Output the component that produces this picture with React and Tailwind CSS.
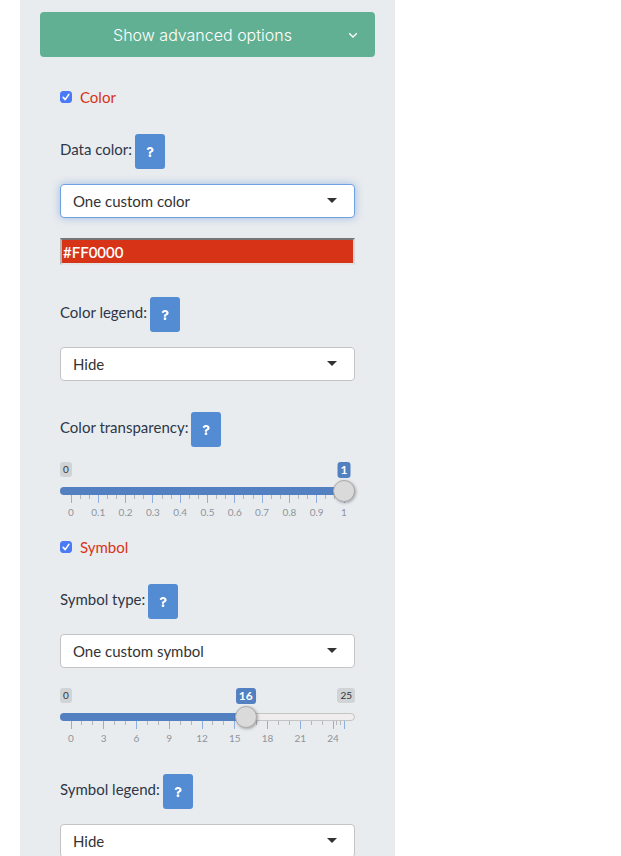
import React, { useState } from 'react';
import { FaQuestion } from 'react-icons/fa';

const LATO = "font-['Lato','Noto_Sans',sans-serif]";

const SectionToggle = ({ id, label }) => {
  const [checked, setChecked] = useState(true);
  return (
    <div className="flex h-5 items-center gap-2">
      <span className="grid size-3">
        <input
          id={id}
          type="checkbox"
          checked={checked}
          onChange={(e) => setChecked(e.target.checked)}
          className="size-3 appearance-none rounded-[3px] border border-[#4a7af5] bg-white [grid-area:1/1] checked:bg-[#4a7af5]"
        />
        {checked && (
          <svg viewBox="0 0 12 12" className="pointer-events-none size-3 [grid-area:1/1]" aria-hidden="true">
            <path d="M3.2 6.4 5.2 8.6 8.9 3.4" fill="none" stroke="#fff" strokeWidth="1.6" strokeLinecap="round" strokeLinejoin="round" />
          </svg>
        )}
      </span>
      <label htmlFor={id} className="text-[15px] leading-5 text-[#d73317]">{label}</label>
    </div>
  );
};

const FieldLabel = ({ htmlFor, children }) => (
  <div className="flex h-[35px] items-center gap-[3px]">
    <label htmlFor={htmlFor} className="pb-[6px] text-[15px] leading-5 text-[#2d3748]">{children}</label>
    <button
      type="button"
      aria-label="Help"
      className="flex h-[35px] w-[30px] items-center justify-center rounded-[3px] bg-[#548cd4] text-white">
      <FaQuestion className="size-[10px]" />
    </button>
  </div>
);

const SelectBox = ({ id, options, active }) => (
  <div className="mt-[15px] grid items-center">
    <select
      id={id}
      className={`h-[34px] w-full appearance-none rounded-[4px] border bg-white px-3 text-[15px] text-[#333] outline-none [grid-area:1/1] ${
        active ? 'border-[#6fa0e0] shadow-[0_0_8px_rgba(84,140,212,0.5)]' : 'border-[#c4c4c4]'
      }`}>
      {options.map((option) => (
        <option key={option}>{option}</option>
      ))}
    </select>
    <svg viewBox="0 0 10 5" className="pointer-events-none mr-[18px] mb-[2px] h-[5px] w-[10px] justify-self-end [grid-area:1/1]" aria-hidden="true">
      <path d="M0 0H10L5 5Z" fill="#333" />
    </svg>
  </div>
);

const Slider = ({ id, max, step, initial, labels, labelSpan, ticks, hideMax }) => {
  const [value, setValue] = useState(initial);
  const ratio = value / max;
  return (
    <div className="text-[10px]">
      <div className="relative flex h-[15px] justify-between leading-[15px] text-[#333]">
        <span className="rounded-[3px] bg-[#d1d4d6] px-[3px]">0</span>
        {!hideMax && <span className="rounded-[3px] bg-[#d1d4d6] px-[3px]">{max}</span>}
        <div className="absolute inset-x-[11px] top-0">
          <output
            htmlFor={id}
            className="absolute top-0 h-4 -translate-x-1/2 rounded-[3px] bg-[#5380c0] px-[3px] text-[12px] leading-4 font-bold text-white"
            style={{ left: `${ratio * 100}%` }}>
            {value}
          </output>
        </div>
      </div>
      <div className="mt-[3px] grid h-[22px] items-center">
        <div className="h-2 overflow-hidden rounded-[4px] border border-[#c4c4c4] bg-[#efeded] [grid-area:1/1]" />
        <div
          className="h-2 rounded-l-[4px] bg-[#5380c0] [grid-area:1/1]"
          style={{ width: `calc((100% - 22px) * ${ratio} + 11px)` }}
        />
        <input
          id={id}
          type="range"
          min={0}
          max={max}
          step={step}
          value={value}
          onChange={(e) => setValue(Number(e.target.value))}
          className="z-10 h-[22px] w-full appearance-none bg-transparent outline-none [grid-area:1/1] [&::-webkit-slider-thumb]:size-[22px] [&::-webkit-slider-thumb]:appearance-none [&::-webkit-slider-thumb]:rounded-full [&::-webkit-slider-thumb]:border [&::-webkit-slider-thumb]:border-[#ababab] [&::-webkit-slider-thumb]:bg-[#dadada] [&::-webkit-slider-thumb]:shadow-[1px_1px_3px_rgba(0,0,0,0.3)]"
        />
      </div>
      {/* the scale starts right under the bar, behind the handle */}
      <div className="-mt-[7px] px-[11px]">
        <svg className="block h-2 w-full overflow-visible" aria-hidden="true">
          {ticks.map(({ at, big }) => (
            <line
              key={at}
              x1={`${at}%`}
              x2={`${at}%`}
              y1="0"
              y2={big ? 8 : 4}
              stroke={big ? '#8fb0de' : '#b3b7bb'}
              strokeWidth="1"
              shapeRendering="crispEdges"
            />
          ))}
        </svg>
        <div className="mt-[3px] flex h-3 justify-between leading-3 text-[#8e949c]" style={{ width: `${labelSpan}%` }}>
          {labels.map((label) => (
            <span key={label} className="flex w-0 justify-center">{label}</span>
          ))}
        </div>
      </div>
    </div>
  );
};

const transparencyTicks = Array.from({ length: 31 }, (_, i) => ({ at: (i * 100) / 30, big: i % 3 === 0 }));

const symbolTicks = [
  ...Array.from({ length: 25 }, (_, i) => ({ at: i * 4, big: i % 3 === 0 })),
  { at: 97.33, big: false },
  { at: 98.67, big: false },
  { at: 100, big: true },
];

const App = () => {
  const [color, setColor] = useState('#FF0000');
  return (
    <div className={`min-h-screen bg-white pl-5 ${LATO}`}>
      <main className="min-h-screen w-full max-w-[375px] bg-[#e9ecef] px-5 pt-3">
        <button
          type="button"
          className="flex h-[45px] w-full items-center rounded-[4px] bg-[#62b093] px-[17px] font-['Inter',sans-serif] text-[16px] font-light text-white">
          <span className="flex-1 text-center">Show advanced options</span>
          <svg viewBox="0 0 10 10" className="size-[10px]" aria-hidden="true">
            <path d="M1.2 3.2 5 7 8.8 3.2" fill="none" stroke="#fff" strokeWidth="1.3" />
          </svg>
        </button>
        <form className="px-5 pt-[30px]">
          <SectionToggle id="color" label="Color" />
          <div className="mt-[27px]">
            <FieldLabel htmlFor="data-color">Data color:</FieldLabel>
            <SelectBox id="data-color" options={['One custom color']} active />
            <input
              type="text"
              aria-label="Custom color"
              value={color}
              onChange={(e) => setColor(e.target.value)}
              className="mt-5 block h-[27px] w-full border-2 border-t-[#767676] border-r-[#d5d5d5] border-b-[#e3e3e3] border-l-[#b5b5b5] bg-[#d73317] px-px text-[15px] font-semibold text-white outline-none"
            />
          </div>
          <div className="mt-8">
            <FieldLabel htmlFor="color-legend">Color legend:</FieldLabel>
            <SelectBox id="color-legend" options={['Hide', 'Show']} />
          </div>
          <div className="mt-[31px]">
            <FieldLabel htmlFor="transparency">Color transparency:</FieldLabel>
            <div className="mt-[15px]">
              <Slider
                id="transparency"
                max={1}
                step={0.1}
                initial={1}
                labels={['0', '0.1', '0.2', '0.3', '0.4', '0.5', '0.6', '0.7', '0.8', '0.9', '1']}
                labelSpan={100}
                ticks={transparencyTicks}
                hideMax
              />
            </div>
          </div>
          <div className="mt-[19px]">
            <SectionToggle id="symbol" label="Symbol" />
          </div>
          <div className="mt-[27px]">
            <FieldLabel htmlFor="symbol-type">Symbol type:</FieldLabel>
            <SelectBox id="symbol-type" options={['One custom symbol']} />
            <div className="mt-5">
              <Slider
                id="symbol-number"
                max={25}
                step={1}
                initial={16}
                labels={['0', '3', '6', '9', '12', '15', '18', '21', '24']}
                labelSpan={96}
                ticks={symbolTicks}
              />
            </div>
          </div>
          <div className="mt-[30px]">
            <FieldLabel htmlFor="symbol-legend">Symbol legend:</FieldLabel>
            <SelectBox id="symbol-legend" options={['Hide', 'Show']} />
          </div>
        </form>
      </main>
    </div>
  );
};

export default App;
